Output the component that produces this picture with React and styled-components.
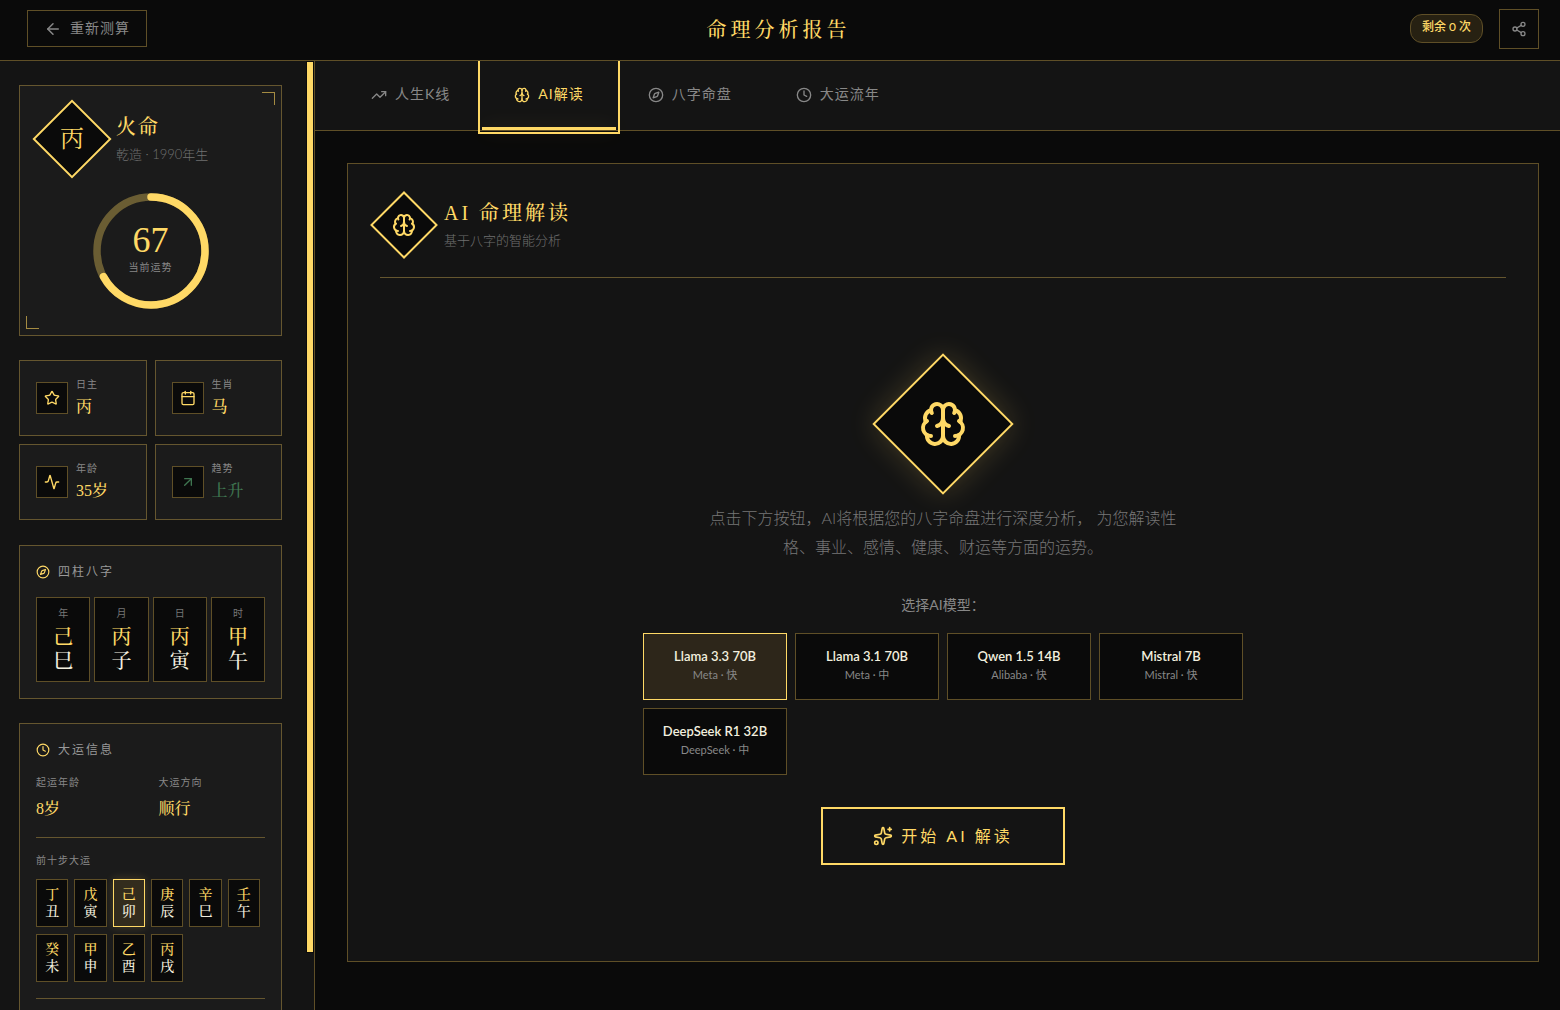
import React, { useState } from "react";
import styled, { createGlobalStyle, css } from "styled-components";
import {
  Activity,
  ArrowLeft,
  ArrowUpRight,
  Brain,
  Calendar,
  Clock,
  Compass,
  Share2,
  Sparkles,
  Star,
  TrendingUp,
} from "lucide-react";

const gold = "#ffd966";
const line = "#5f4f27";
const cardLine = "#65562f";
const ink = "#0a0a0a";
const panel = "#141414";
const card = "#1b1b1b";
const muted = "#888888";
const cream = "#f2efdf";
const green = "#3f7550";
const serif = `"Liberation Serif", "Noto Serif CJK SC", "Noto Sans CJK SC", serif`;

const GlobalStyle = createGlobalStyle`
  * {
    box-sizing: border-box;
  }
  body {
    margin: 0;
    background: ${ink};
    color: ${cream};
    font-family: Lato, "Noto Sans CJK SC", sans-serif;
  }
  button {
    font-family: inherit;
    cursor: pointer;
  }
  h1, h2, h3, p {
    margin: 0;
    font-weight: 400;
  }
`;

const Page = styled.div`
  display: flex;
  flex-direction: column;
  height: 100vh;
  overflow: hidden;
`;

// Text next to an icon sits a little above the icon's middle
const Caption = styled.span`
  padding-bottom: 3px;
`;

// Header
const Header = styled.header`
  display: flex;
  align-items: center;
  justify-content: space-between;
  flex-shrink: 0;
  height: 61px;
  padding: 0 21px 3px 27px;
  border-bottom: 1px solid ${line};
`;

const BackButton = styled.button`
  display: flex;
  align-items: center;
  gap: 8px;
  height: 37px;
  padding: 0 16px;
  background: none;
  border: 1px solid ${line};
  color: ${muted};
  font-size: 14px;
  letter-spacing: 1px;
`;

const PageTitle = styled.h1`
  color: ${gold};
  font-family: ${serif};
  font-size: 20px;
  font-weight: 500;
  letter-spacing: 4px;
`;

const HeaderActions = styled.div`
  display: flex;
  align-items: center;
  gap: 16px;
`;

const Quota = styled.span`
  height: 29px;
  padding: 0 11px;
  border: 1px solid ${line};
  border-radius: 12px;
  background: #272112;
  color: ${gold};
  font-size: 12px;
  font-weight: 500;
  line-height: 24px;
`;

const ShareButton = styled.button`
  display: grid;
  place-items: center;
  width: 40px;
  height: 40px;
  padding: 0;
  background: none;
  border: 1px solid ${line};
  color: ${muted};
`;

const Body = styled.div`
  display: flex;
  flex: 1;
  min-height: 0;
`;

// Sidebar
const Sidebar = styled.aside`
  display: flex;
  flex-shrink: 0;
  width: 315px;
  background: ${panel};
  border-right: 1px solid ${line};
`;

const SidebarScroll = styled.div`
  display: flex;
  flex: 1;
  flex-direction: column;
  gap: 24px;
  padding: 24px 24px 24px 19px;
  overflow: hidden;
`;

const ScrollRail = styled.div`
  width: 8px;
`;

const ScrollThumb = styled.div`
  height: 94%;
  background: ${gold};
  border: 1px solid ${ink};
`;

const Card = styled.section`
  flex-shrink: 0;
  padding: 16px;
  background: ${card};
  border: 1px solid ${cardLine};
`;

const ProfileCard = styled(Card)`
  position: relative;
  padding: 24px;

  &::before,
  &::after {
    content: "";
    position: absolute;
    width: 12px;
    height: 12px;
    border: 0 solid #a48b42;
  }
  &::before {
    top: 6px;
    right: 6px;
    border-width: 1px 1px 0 0;
  }
  &::after {
    bottom: 6px;
    left: 6px;
    border-width: 0 0 1px 1px;
  }
`;

const Identity = styled.div`
  display: flex;
  align-items: center;
  gap: 16px;
`;

const Diamond = styled.div`
  display: grid;
  place-items: center;
  flex-shrink: 0;
  width: ${(p) => p.$size}px;
  height: ${(p) => p.$size}px;
  background: ${ink};
  border: 2px solid ${gold};
  color: ${gold};
  font-family: ${serif};
  font-size: 24px;
  line-height: 1;
  transform: rotate(45deg);
  box-shadow: ${(p) => (p.$glow ? "0 0 30px rgba(255, 217, 102, 0.2)" : "none")};

  > * {
    transform: rotate(-45deg);
  }
`;

const IdentityTitle = styled.h2`
  color: ${gold};
  font-family: ${serif};
  font-size: 20px;
  font-weight: 500;
  line-height: 34px;
  letter-spacing: ${(p) => (p.$wide ? 3 : 2)}px;
`;

const IdentityNote = styled.p`
  padding-bottom: 3px;
  color: #707070;
  font-size: 13px;
  font-weight: 300;
  line-height: 20px;
`;

const Gauge = styled.div`
  display: grid;
  place-items: center;
  margin-top: 24px;

  > * {
    grid-area: 1 / 1;
  }
  svg {
    display: block;
  }
`;

const GaugeText = styled.div`
  padding-bottom: 6px;
  text-align: center;
`;

const Score = styled.div`
  margin-bottom: 2px;
  color: ${gold};
  font-family: ${serif};
  font-size: 36px;
  line-height: 36px;
`;

const Label = styled.div`
  color: ${muted};
  font-size: 10px;
  line-height: 14px;
  letter-spacing: 1px;
`;

const StatGrid = styled.div`
  display: grid;
  grid-template-columns: 1fr 1fr;
  grid-auto-rows: 76px;
  flex-shrink: 0;
  gap: 8px;
  min-height: 161px;
`;

const Stat = styled.div`
  display: flex;
  align-items: center;
  gap: 8px;
  padding: 0 16px;
  background: ${card};
  border: 1px solid ${cardLine};
`;

const StatIcon = styled.div`
  display: grid;
  place-items: center;
  width: 32px;
  height: 32px;
  background: ${ink};
  border: 1px solid ${line};
  color: ${(p) => p.$color};
`;

const Value = styled.div`
  margin-top: ${(p) => p.$gap}px;
  color: ${(p) => p.$color || gold};
  font-family: ${serif};
  font-size: 16px;
  font-weight: 500;
  line-height: 24px;
`;

const SectionTitle = styled.h3`
  display: flex;
  align-items: center;
  gap: 8px;
  height: 19px;
  margin-bottom: 16px;
  color: #999999;
  font-size: 12px;
  letter-spacing: 2px;

  svg {
    color: ${gold};
  }
`;

const Pillars = styled.div`
  display: grid;
  grid-template-columns: repeat(4, 1fr);
  gap: 4px;
`;

const Pillar = styled.div`
  padding: 8px 4px;
  background: ${ink};
  border: 1px solid ${line};
  font-family: ${serif};
  font-size: 20px;
  font-weight: 500;
  line-height: 24px;
  text-align: center;
`;

const PillarName = styled.div`
  margin-bottom: 5px;
  color: #777777;
  font-family: Lato, "Noto Sans CJK SC", sans-serif;
  font-size: 10px;
  font-weight: 400;
  line-height: 14px;
`;

const Stem = styled.div`
  color: ${gold};
`;

const InfoGrid = styled.div`
  display: grid;
  grid-template-columns: 1fr 1fr;
  gap: 16px;
`;

const Divided = styled.div`
  margin-top: 16px;
  padding-top: 15px;
  border-top: 1px solid ${cardLine};
`;

const Steps = styled.div`
  display: grid;
  grid-template-columns: repeat(6, 1fr);
  gap: 7px 6px;
  max-width: 224px;
  margin-top: 12px;
`;

const Step = styled.div`
  padding: 6px 0;
  background: ${ink};
  border: 1px solid ${line};
  font-family: ${serif};
  font-size: 14px;
  font-weight: 500;
  line-height: 17px;
  text-align: center;

  ${(p) =>
    p.$current &&
    css`
      background: #332c1d;
      border-color: ${gold};
      box-shadow: 0 0 10px rgba(255, 217, 102, 0.2);
    `}
`;

// Main area
const Main = styled.main`
  flex: 1;
  min-width: 0;
  overflow: hidden;
`;

const Tabs = styled.nav`
  display: flex;
  height: 70px;
  padding-left: 24px;
  background: ${panel};
  border-bottom: 1px solid ${line};
`;

const Tab = styled.button`
  position: relative;
  display: flex;
  align-items: center;
  gap: 8px;
  padding: 0 32px 2px;
  background: none;
  border: 0;
  color: ${muted};
  font-size: 14px;
  letter-spacing: 1px;
  white-space: nowrap;

  ${(p) =>
    p.$active &&
    css`
      color: ${gold};
      outline: 2px solid ${gold};
      outline-offset: 2px;

      &::after {
        content: "";
        position: absolute;
        right: 0;
        bottom: 0;
        left: 0;
        height: 3px;
        background: ${gold};
        box-shadow: 0 0 20px rgba(255, 217, 102, 0.2);
      }
    `}
`;

const Content = styled.div`
  padding: 32px 21px 32px 32px;
`;

const Report = styled.section`
  padding: 32px;
  background: ${panel};
  border: 1px solid ${line};
`;

const ReportHeader = styled.div`
  display: flex;
  align-items: center;
  gap: 16px;
  padding-bottom: 24px;
  border-bottom: 1px solid ${cardLine};
`;

const Intro = styled.div`
  display: flex;
  flex-direction: column;
  align-items: center;
  padding: 96px 0 64px;
`;

const Description = styled.p`
  max-width: 480px;
  margin: 29px 0 33px;
  color: #777777;
  font-size: 16px;
  font-weight: 300;
  line-height: 29px;
  text-align: center;
`;

const ModelLabel = styled.div`
  margin-bottom: 18px;
  color: ${muted};
  font-size: 14px;
  line-height: 21px;
`;

const ModelGrid = styled.div`
  display: grid;
  grid-template-columns: repeat(4, 1fr);
  gap: 8px;
  width: 100%;
  max-width: 600px;
`;

const Model = styled.button`
  height: 67px;
  padding: 0 8px 4px;
  background: ${(p) => (p.$selected ? "#2d261a" : ink)};
  border: 1px solid ${(p) => (p.$selected ? gold : line)};
  text-align: center;
`;

const ModelName = styled.div`
  color: ${cream};
  font-size: 13px;
  font-weight: 600;
  line-height: 20px;
`;

const ModelMeta = styled.div`
  color: ${muted};
  font-size: 11px;
  line-height: 18px;
`;

const StartButton = styled.button`
  display: flex;
  align-items: center;
  justify-content: center;
  gap: 8px;
  min-width: 244px;
  height: 58px;
  margin-top: 32px;
  padding: 0 46px;
  background: none;
  border: 2px solid ${gold};
  color: ${gold};
  font-size: 16px;
  letter-spacing: 3px;
`;

const stats = [
  { label: "日主", value: "丙", icon: Star },
  { label: "生肖", value: "马", icon: Calendar },
  { label: "年龄", value: "35岁", icon: Activity },
  { label: "趋势", value: "上升", icon: ArrowUpRight, color: green },
];

const pillars = [
  ["年", "己", "巳"],
  ["月", "丙", "子"],
  ["日", "丙", "寅"],
  ["时", "甲", "午"],
];

const steps = ["丁丑", "戊寅", "己卯", "庚辰", "辛巳", "壬午", "癸未", "甲申", "乙酉", "丙戌"];

const tabs = [
  { label: "人生K线", icon: TrendingUp },
  { label: "AI解读", icon: Brain },
  { label: "八字命盘", icon: Compass },
  { label: "大运流年", icon: Clock },
];

const models = [
  { name: "Llama 3.3 70B", meta: "Meta · 快" },
  { name: "Llama 3.1 70B", meta: "Meta · 中" },
  { name: "Qwen 1.5 14B", meta: "Alibaba · 快" },
  { name: "Mistral 7B", meta: "Mistral · 快" },
  { name: "DeepSeek R1 32B", meta: "DeepSeek · 中" },
];

function ScoreGauge({ score }) {
  const length = 2 * Math.PI * 54;
  return (
    <Gauge>
      <svg width="120" height="120" viewBox="0 0 120 120" fill="none" strokeWidth="7.5">
        <circle cx="60" cy="60" r="54" stroke="#6a5d33" />
        <circle
          cx="60"
          cy="60"
          r="54"
          stroke={gold}
          strokeLinecap="round"
          strokeDasharray={`${(length * score) / 100} ${length}`}
          transform="rotate(-90 60 60)"
        />
      </svg>
      <GaugeText>
        <Score>{score}</Score>
        <Label>当前运势</Label>
      </GaugeText>
    </Gauge>
  );
}

function ProfileSidebar() {
  return (
    <Sidebar>
      <SidebarScroll>
        <ProfileCard>
          <Identity>
            <Diamond $size={56}>
              <span>丙</span>
            </Diamond>
            <div>
              <IdentityTitle>火命</IdentityTitle>
              <IdentityNote>乾造 · 1990年生</IdentityNote>
            </div>
          </Identity>
          <ScoreGauge score={67} />
        </ProfileCard>

        <StatGrid>
          {stats.map(({ label, value, icon: Icon, color }) => (
            <Stat key={label}>
              <StatIcon $color={color || gold}>
                <Icon size={16} />
              </StatIcon>
              <div>
                <Label>{label}</Label>
                <Value $gap={4} $color={color}>{value}</Value>
              </div>
            </Stat>
          ))}
        </StatGrid>

        <Card>
          <SectionTitle>
            <Compass size={14} />
            <Caption>四柱八字</Caption>
          </SectionTitle>
          <Pillars>
            {pillars.map(([name, stem, branch]) => (
              <Pillar key={name}>
                <PillarName>{name}</PillarName>
                <Stem>{stem}</Stem>
                <div>{branch}</div>
              </Pillar>
            ))}
          </Pillars>
        </Card>

        <Card>
          <SectionTitle>
            <Clock size={14} />
            <Caption>大运信息</Caption>
          </SectionTitle>
          <InfoGrid>
            <div>
              <Label>起运年龄</Label>
              <Value $gap={8}>8岁</Value>
            </div>
            <div>
              <Label>大运方向</Label>
              <Value $gap={8}>顺行</Value>
            </div>
          </InfoGrid>
          <Divided>
            <Label>前十步大运</Label>
            <Steps>
              {steps.map((step, i) => (
                <Step key={step} $current={i === 2}>
                  <Stem>{step[0]}</Stem>
                  <div>{step[1]}</div>
                </Step>
              ))}
            </Steps>
          </Divided>
          <Divided />
        </Card>
      </SidebarScroll>
      <ScrollRail>
        <ScrollThumb />
      </ScrollRail>
    </Sidebar>
  );
}

function App() {
  const [activeTab, setActiveTab] = useState("AI解读");
  const [model, setModel] = useState("Llama 3.3 70B");

  return (
    <Page>
      <GlobalStyle />
      <Header>
        <BackButton type="button">
          <ArrowLeft size={18} />
          <Caption>重新测算</Caption>
        </BackButton>
        <PageTitle>命理分析报告</PageTitle>
        <HeaderActions>
          <Quota>剩余 0 次</Quota>
          <ShareButton type="button" aria-label="分享">
            <Share2 size={16} />
          </ShareButton>
        </HeaderActions>
      </Header>

      <Body>
        <ProfileSidebar />
        <Main>
          <Tabs>
            {tabs.map(({ label, icon: Icon }) => (
              <Tab
                key={label}
                type="button"
                $active={label === activeTab}
                onClick={() => setActiveTab(label)}
              >
                <Icon size={16} />
                <Caption>{label}</Caption>
              </Tab>
            ))}
          </Tabs>

          <Content>
            <Report>
              <ReportHeader>
                <Diamond $size={48}>
                  <Brain size={24} />
                </Diamond>
                <div>
                  <IdentityTitle $wide>AI 命理解读</IdentityTitle>
                  <IdentityNote>基于八字的智能分析</IdentityNote>
                </div>
              </ReportHeader>

              <Intro>
                <Diamond $size={100} $glow>
                  <Brain size={48} />
                </Diamond>
                <Description>
                  点击下方按钮，AI将根据您的八字命盘进行深度分析， 为您解读性格、事业、感情、健康、财运等方面的运势。
                </Description>
                <ModelLabel>选择AI模型：</ModelLabel>
                <ModelGrid>
                  {models.map((m) => (
                    <Model
                      key={m.name}
                      type="button"
                      aria-pressed={m.name === model}
                      $selected={m.name === model}
                      onClick={() => setModel(m.name)}
                    >
                      <ModelName>{m.name}</ModelName>
                      <ModelMeta>{m.meta}</ModelMeta>
                    </Model>
                  ))}
                </ModelGrid>
                <StartButton type="button">
                  <Sparkles size={20} />
                  <Caption>开始 AI 解读</Caption>
                </StartButton>
              </Intro>
            </Report>
          </Content>
        </Main>
      </Body>
    </Page>
  );
}

export default App;
